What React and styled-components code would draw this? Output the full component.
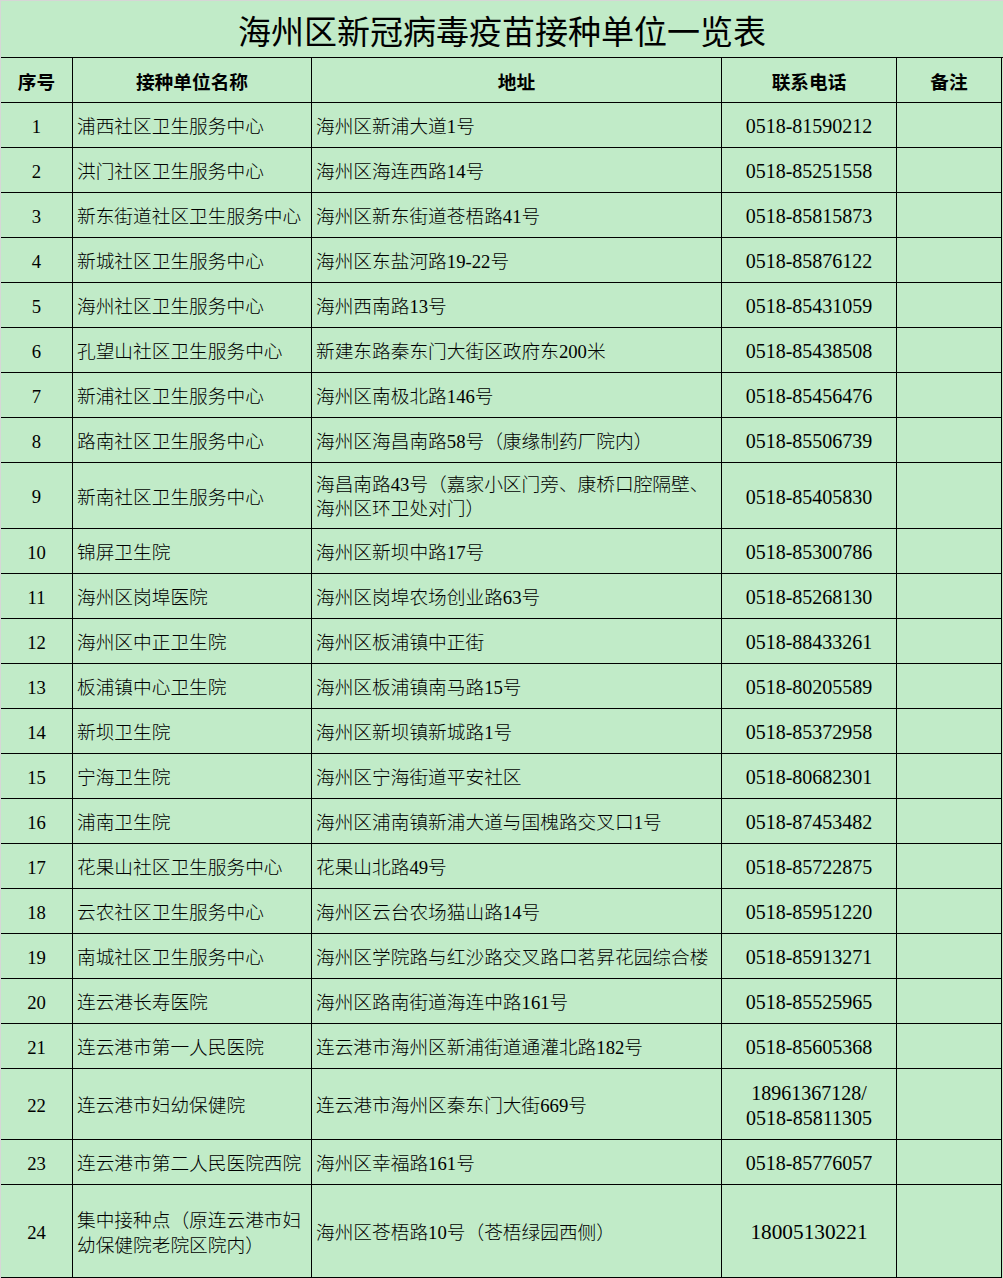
import React from "react";
import styled, { createGlobalStyle } from "styled-components";

const GlobalStyle = createGlobalStyle`
  html, body {
    margin: 0;
    padding: 0;
    background: #c1ebc8;
  }
  body {
    font-family: "Liberation Serif", "Noto Sans CJK SC", serif;
    color: #000;
  }
`;

const COLS = "72px 239px 410px 175px 105px";

const Sheet = styled.div`
  width: 1002px;
  background: #c1ebc8;
  border-top: 1px solid #d6d6d6;
  border-left: 1px solid #d6d6d6;
`;

const Title = styled.h1`
  margin: 0;
  height: 57px;
  box-sizing: border-box;
  border-bottom: 1px solid #000;
  display: flex;
  align-items: center;
  justify-content: center;
  padding-top: 2px;
  font-family: "Noto Sans CJK SC", sans-serif;
  font-weight: 400;
  font-size: 33px;
  line-height: 1;
  letter-spacing: 0;
`;

const Row = styled.div`
  display: grid;
  grid-template-columns: ${COLS};
  height: ${(p) => p.$h || 45}px;
`;

const Cell = styled.div`
  box-sizing: border-box;
  border-right: 1px solid #000;
  border-bottom: 1px solid #000;
  display: flex;
  flex-direction: column;
  justify-content: center;
  align-items: ${(p) => (p.$align === "left" ? "flex-start" : "center")};
  text-align: ${(p) => (p.$align === "left" ? "left" : "center")};
  padding: 3px 0 0 ${(p) => (p.$align === "left" ? 4 : 0)}px;
  font-size: ${(p) => p.$size || 18.7}px;
  line-height: ${(p) => p.$lh || 24}px;
  white-space: nowrap;
  font-weight: 300;
`;

const HeadCell = styled(Cell)`
  font-family: "Noto Sans CJK SC", sans-serif;
  font-weight: 700;
  font-size: 18.7px;
  padding-top: 1px;
`;

const rows = [
  ["1", "浦西社区卫生服务中心", "海州区新浦大道1号", "0518-81590212"],
  ["2", "洪门社区卫生服务中心", "海州区海连西路14号", "0518-85251558"],
  ["3", "新东街道社区卫生服务中心", "海州区新东街道苍梧路41号", "0518-85815873"],
  ["4", "新城社区卫生服务中心", "海州区东盐河路19-22号", "0518-85876122"],
  ["5", "海州社区卫生服务中心", "海州西南路13号", "0518-85431059"],
  ["6", "孔望山社区卫生服务中心", "新建东路秦东门大街区政府东200米", "0518-85438508"],
  ["7", "新浦社区卫生服务中心", "海州区南极北路146号", "0518-85456476"],
  ["8", "路南社区卫生服务中心", "海州区海昌南路58号（康缘制药厂院内）", "0518-85506739"],
  [
    "9",
    "新南社区卫生服务中心",
    ["海昌南路43号（嘉家小区门旁、康桥口腔隔壁、", "海州区环卫处对门）"],
    "0518-85405830",
    66,
  ],
  ["10", "锦屏卫生院", "海州区新坝中路17号", "0518-85300786"],
  ["11", "海州区岗埠医院", "海州区岗埠农场创业路63号", "0518-85268130"],
  ["12", "海州区中正卫生院", "海州区板浦镇中正街", "0518-88433261"],
  ["13", "板浦镇中心卫生院", "海州区板浦镇南马路15号", "0518-80205589"],
  ["14", "新坝卫生院", "海州区新坝镇新城路1号", "0518-85372958"],
  ["15", "宁海卫生院", "海州区宁海街道平安社区", "0518-80682301"],
  ["16", "浦南卫生院", "海州区浦南镇新浦大道与国槐路交叉口1号", "0518-87453482"],
  ["17", "花果山社区卫生服务中心", "花果山北路49号", "0518-85722875"],
  ["18", "云农社区卫生服务中心", "海州区云台农场猫山路14号", "0518-85951220"],
  ["19", "南城社区卫生服务中心", "海州区学院路与红沙路交叉路口茗昇花园综合楼", "0518-85913271"],
  ["20", "连云港长寿医院", "海州区路南街道海连中路161号", "0518-85525965"],
  ["21", "连云港市第一人民医院", "连云港市海州区新浦街道通灌北路182号", "0518-85605368"],
  [
    "22",
    "连云港市妇幼保健院",
    "连云港市海州区秦东门大街669号",
    ["18961367128/", "0518-85811305"],
    71,
  ],
  ["23", "连云港市第二人民医院西院", "海州区幸福路161号", "0518-85776057"],
  [
    "24",
    ["集中接种点（原连云港市妇", "幼保健院老院区院内）"],
    "海州区苍梧路10号（苍梧绿园西侧）",
    "18005130221",
    93,
    21.3,
  ],
];

const Lines = ({ value }) =>
  Array.isArray(value)
    ? value.map((line, i) => <span key={i}>{line}</span>)
    : value;

export default function App() {
  return (
    <>
      <GlobalStyle />
      <Sheet>
        <Title>海州区新冠病毒疫苗接种单位一览表</Title>
        <Row>
          <HeadCell>序号</HeadCell>
          <HeadCell>接种单位名称</HeadCell>
          <HeadCell>地址</HeadCell>
          <HeadCell>联系电话</HeadCell>
          <HeadCell>备注</HeadCell>
        </Row>
        {rows.map(([no, name, addr, tel, h, telSize]) => (
          <Row key={no} $h={h}>
            <Cell>{no}</Cell>
            <Cell $align="left" $lh={25}>
              <Lines value={name} />
            </Cell>
            <Cell $align="left">
              <Lines value={addr} />
            </Cell>
            <Cell $size={telSize || 20} $lh={25}>
              <Lines value={tel} />
            </Cell>
            <Cell />
          </Row>
        ))}
      </Sheet>
    </>
  );
}
